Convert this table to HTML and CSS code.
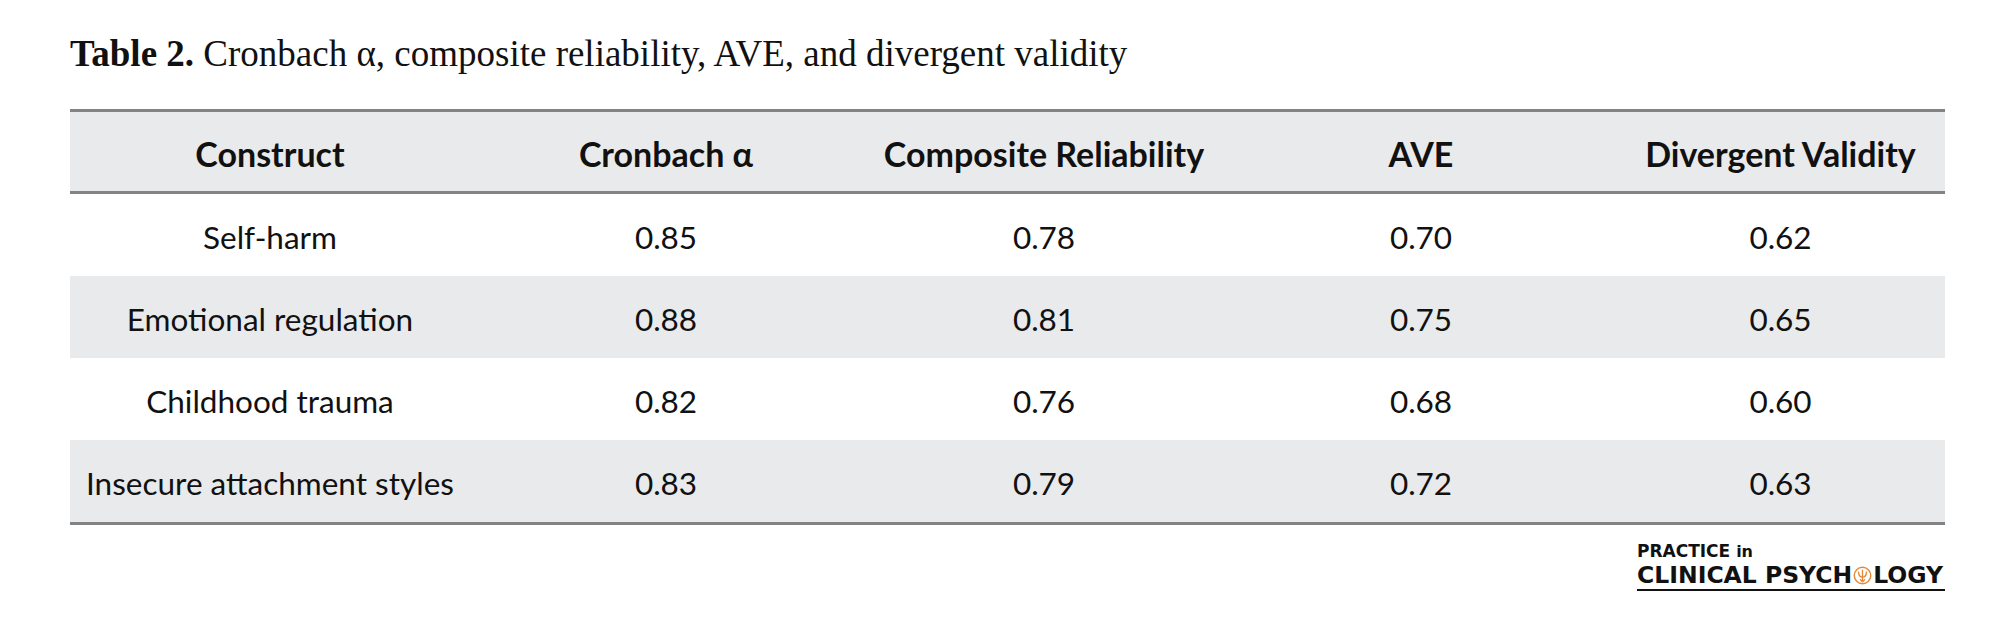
FILE: index.html
```html
<!DOCTYPE html>
<html lang="en">
<head>
<meta charset="utf-8">
<title>Table 2</title>
<link rel="stylesheet" href="styles.css">
</head>
<body>
<div class="page">
  <p class="caption"><b>Table 2.</b> Cronbach α, composite reliability, AVE, and divergent validity</p>
  <div class="table">
    <div class="row head">
      <div class="cell">Construct</div>
      <div class="cell">Cronbach α</div>
      <div class="cell">Composite Reliability</div>
      <div class="cell">AVE</div>
      <div class="cell">Divergent Validity</div>
    </div>
    <div class="row">
      <div class="cell">Self-harm</div>
      <div class="cell">0.85</div>
      <div class="cell">0.78</div>
      <div class="cell">0.70</div>
      <div class="cell">0.62</div>
    </div>
    <div class="row shade">
      <div class="cell">Emotional regulation</div>
      <div class="cell">0.88</div>
      <div class="cell">0.81</div>
      <div class="cell">0.75</div>
      <div class="cell">0.65</div>
    </div>
    <div class="row">
      <div class="cell">Childhood trauma</div>
      <div class="cell">0.82</div>
      <div class="cell">0.76</div>
      <div class="cell">0.68</div>
      <div class="cell">0.60</div>
    </div>
    <div class="row shade last">
      <div class="cell">Insecure attachment styles</div>
      <div class="cell">0.83</div>
      <div class="cell">0.79</div>
      <div class="cell">0.72</div>
      <div class="cell">0.63</div>
    </div>
  </div>
  <div class="logo-wrap">
    <div class="logo">
      <div class="logo-top">PRACTICE <span class="in">in</span></div>
      <div class="logo-bottom">CLINICAL PSYCH<svg class="psi" viewBox="0 0 20 20" width="19" height="19"><circle cx="10" cy="10" r="8.7" fill="none" stroke="#e38a3a" stroke-width="1.5"/><path d="M5.8 6.4 Q6.2 11.6 10 11.8 Q13.8 11.6 14.2 6.4 M10 4.4 V16.6 M7.8 14.4 L10 16.6 L12.2 14.4" fill="none" stroke="#e38a3a" stroke-width="1.4" stroke-linecap="round" stroke-linejoin="round"/></svg>LOGY</div>
    </div>
  </div>
</div>
</body>
</html>
```

FILE: styles.css
```css
html, body {
  margin: 0;
  padding: 0;
  background: #ffffff;
}

.page {
  width: 1875px;
  padding: 33px 0 0 70px;
}

.caption {
  margin: 0 0 34px 0;
  font-family: "Liberation Serif", serif;
  font-size: 37px;
  line-height: 42px;
  color: #111111;
}

.caption b {
  font-weight: bold;
}

.table {
  border-top: 3px solid #838383;
  border-bottom: 3px solid #838383;
  font-family: Lato, "Liberation Sans", sans-serif;
  color: #111111;
}

.row {
  display: grid;
  grid-template-columns: 400px 392px 364px 390px 329px;
  height: 82px;
  align-items: center;
}

.row.head {
  height: 79px;
  background: #e9eaec;
  border-bottom: 3px solid #838383;
  font-weight: bold;
}

.row.shade {
  background: #e9eaec;
}

.cell {
  text-align: center;
  font-size: 31.5px;
  line-height: 36px;
  padding-top: 4px;
  white-space: nowrap;
}

.head .cell {
  font-size: 34px;
}

.logo-wrap {
  display: flex;
  justify-content: flex-end;
  padding-top: 16px;
}

.logo {
  width: 308px;
  border-bottom: 2px solid #111111;
  padding-bottom: 0;
  font-family: "DejaVu Sans", sans-serif;
  font-weight: bold;
  color: #111111;
}

.logo-top {
  font-size: 17px;
  line-height: 20px;
}

.logo-top .in {
  font-size: 16px;
}

.logo-bottom {
  font-size: 23.5px;
  line-height: 27px;
  display: flex;
  align-items: center;
  white-space: nowrap;
}

.psi {
  flex-shrink: 0;
  margin: 0 1px 0 1px;
}
```
